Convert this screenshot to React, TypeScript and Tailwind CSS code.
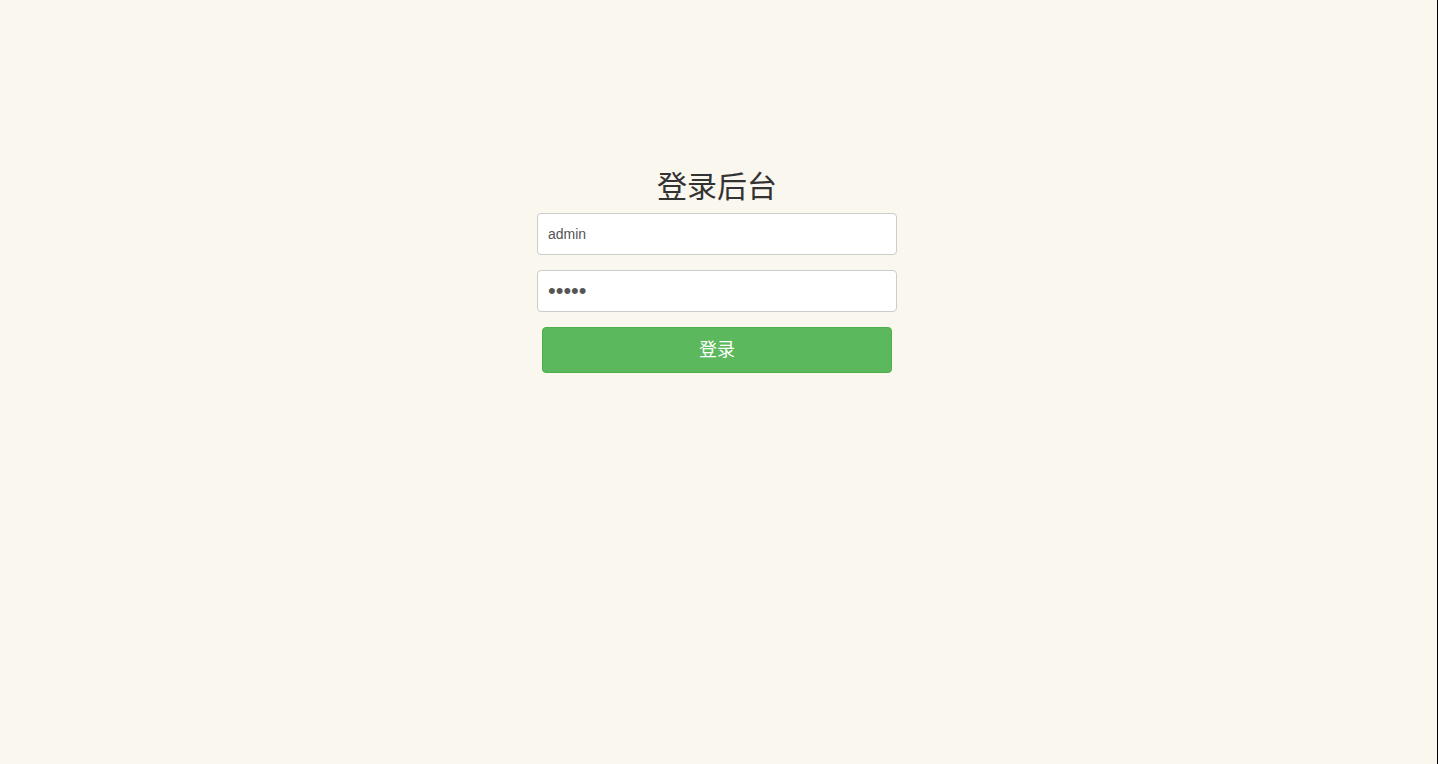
import React from "react";

export default function App() {
  return (
    <div
      className="w-[1438px] h-[764px] bg-[#faf7ef] border-r border-black flex justify-center overflow-hidden"
      style={{ fontFamily: '"Liberation Sans", "Noto Sans CJK SC", sans-serif' }}
    >
      <div className="w-[360px] mr-[3px] pt-[165px] flex flex-col items-stretch">
        <h1 className="text-[30px] leading-[44px] h-[48px] pb-[4px] text-[#333] text-center font-normal overflow-hidden">
          登录后台
        </h1>
        <input
          readOnly
          value="admin"
          className="h-[42px] bg-white border border-[#ccc] rounded-[4px] px-[10px] text-[14px] text-[#555] outline-none"
        />
        <input
          readOnly
          type="password"
          value="admin"
          className="mt-[15px] h-[42px] bg-white border border-[#ccc] rounded-[4px] px-[10px] text-[22px] text-[#555] outline-none"
        />
        <button className="mt-[15px] mx-[5px] h-[46px] bg-[#5cb85c] border border-[#4cae4c] rounded-[4px] text-white text-[18px]">
          登录
        </button>
      </div>
    </div>
  );
}
